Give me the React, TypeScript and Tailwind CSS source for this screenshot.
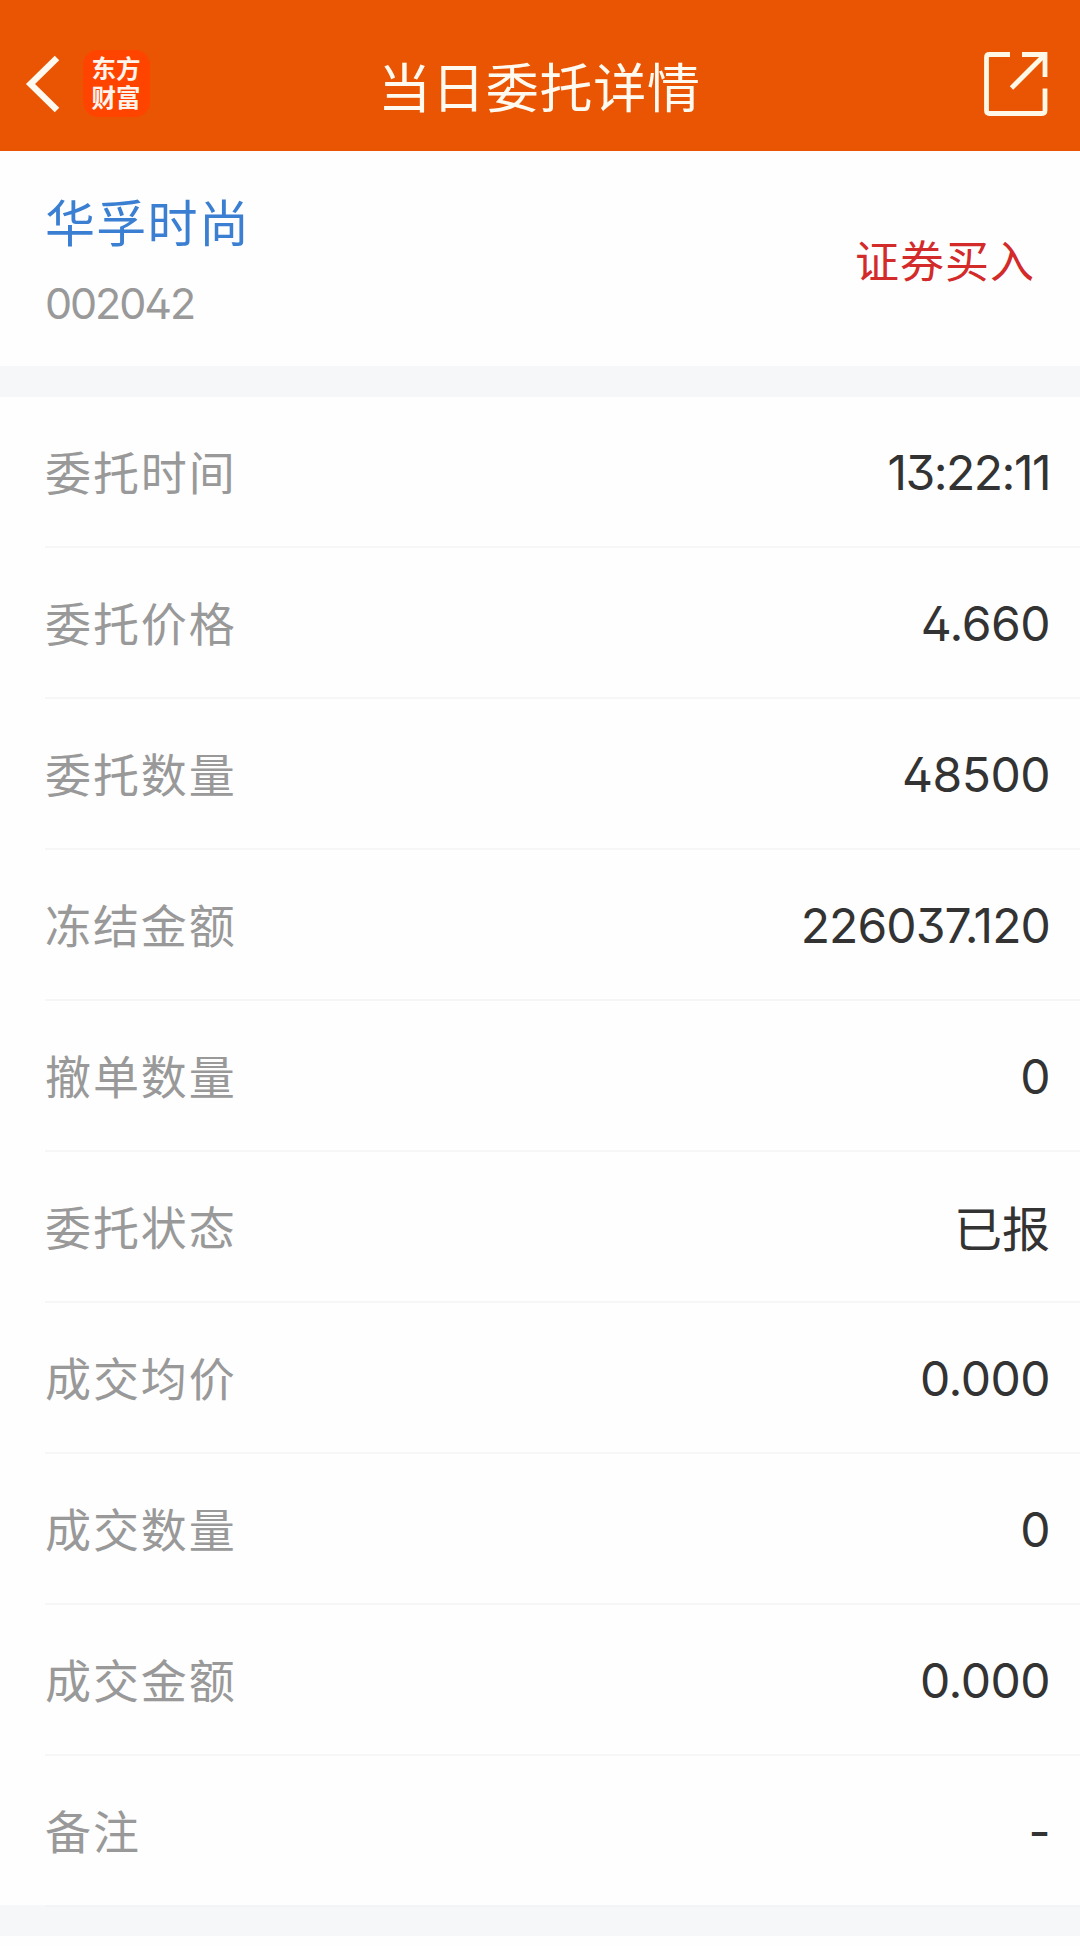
interface RowProps {
    label: string,
    value: string,
    valueClass?: string
}

const num = "font-[Inter,sans-serif] font-[370] tracking-[-0.500px]"

const rows: RowProps[] = [
    { label: "委托时间", value: "13:22:11", valueClass: "font-[Inter,sans-serif] font-[370] tracking-[-1.500px]" },
    { label: "委托价格", value: "4.660" },
    { label: "委托数量", value: "48500" },
    { label: "冻结金额", value: "226037.120", valueClass: "font-[Inter,sans-serif] font-[370] tracking-[-0.900px]" },
    { label: "撤单数量", value: "0" },
    { label: "委托状态", value: "已报", valueClass: "text-[45.500px] -mt-[4px]" },
    { label: "成交均价", value: "0.000" },
    { label: "成交数量", value: "0" },
    { label: "成交金额", value: "0.000" },
    { label: "备注", value: "-" },
]

const BackIcon = () => (
    <svg width="36" height="60" viewBox="0 0 36 60" fill="none" stroke="#fffaf0" strokeWidth="6.4">
        <path d="M33 4L6.500 30L33 56" />
    </svg>
)

const ShareIcon = () => (
    <svg width="64" height="64" viewBox="0 0 64 64" fill="none" stroke="#fff8e6" strokeWidth="4.8">
        <path d="M26 2.500H5.500Q2.500 2.500 2.500 5.500V58.500Q2.500 61.500 5.500 61.500H58Q61 61.500 61 58.500V36.500" />
        <path d="M38 2.500H61V25" />
        <path d="M27.500 36L60.500 3" />
    </svg>
)

const Logo = () => (
    <div className="flex h-[67px] w-[67px] flex-col rounded-[15px] bg-[#ff4400] pt-[3px] pr-px text-center text-[24.500px] leading-[29px] font-bold text-[#fff4ec]">
        <span>东方</span>
        <span>财富</span>
    </div>
)

const Header = () => (
    <header className="flex h-[151px] items-start justify-between bg-[#ea5504] pr-8 pl-6">
        <div className="flex w-[280px] items-center gap-[23px] pt-[50px]">
            <BackIcon />
            <Logo />
        </div>
        <h1 className="-mr-[7px] pt-[48px] text-[53px] leading-[75px] tracking-[0.800px] whitespace-nowrap text-[#fffaf0]">当日委托详情</h1>
        <div className="flex w-[280px] justify-end pt-[52px]">
            <ShareIcon />
        </div>
    </header>
)

const Stock = () => (
    <section className="flex h-[215px] justify-between pr-[45px] pl-[45px]">
        <div className="pt-[33px]">
            <div className="text-[50px] leading-[72px] tracking-[1.300px] text-[#3b7fd2]">华孚时尚</div>
            <div className="mt-[19px] font-[Inter,sans-serif] text-[43px] leading-[56px] font-[370] tracking-[-2.100px] text-[#999999] [font-feature-settings:'cv02','cv09']">002042</div>
        </div>
        <div className="pt-[76px] text-[44px] leading-[64px] tracking-[1px] text-[#d32a2a]">证券买入</div>
    </section>
)

const Row = ({ label, value, valueClass = num }: RowProps) => (
    <div className="ml-[45px] flex h-[151px] items-center justify-between border-b-2 border-[#f6f6f7] pt-[2px] pr-[30px] last:h-[149px] last:border-b-0">
        <span className="-mt-[5px] text-[46px] leading-[66px] tracking-[1.900px] text-[#999999]">{label}</span>
        <span className={`text-[48px] leading-[60px] text-[#333333] [font-feature-settings:'cv02','cv09'] ${valueClass}`}>{value}</span>
    </div>
)

const App = () => {
    return (
        <main className="h-[1946px] w-[1080px] overflow-hidden bg-[#fefefe] font-['Noto_Sans_CJK_SC',sans-serif]">
            <Header />
            <Stock />
            <div className="h-[31px] bg-[#f6f7f9]" />
            <div>
                {rows.map((row) => (
                    <Row key={row.label} {...row} />
                ))}
            </div>
            <div className="h-[31px] bg-[#f6f7f9] pl-[45px]">
                <div className="h-[2px] bg-[#f3f4f6]" />
            </div>
        </main>
    )
}

export default App
